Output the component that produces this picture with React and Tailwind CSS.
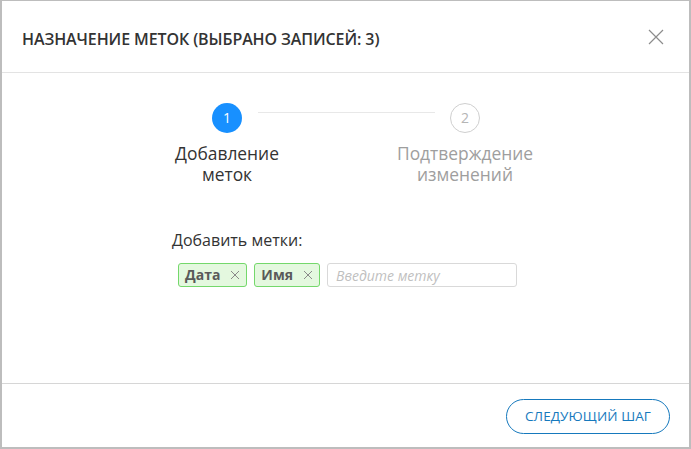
import React from "react";

const font = { fontFamily: '"Open Sans", "Noto Sans", sans-serif' };

const Tag = ({ label }) => {
  return (
    <div className="flex items-center h-[24px] pl-[6px] pr-[6px] gap-[10px] rounded-[3px] border border-[#74d86b] bg-[#e4f8df]">
      <span className="text-[14px] font-bold text-[#5a5a5a] leading-none">{label}</span>
      <svg width="10" height="10" viewBox="0 0 10 10" className="text-[#8a8a8a]">
        <path d="M1 1L9 9M9 1L1 9" stroke="currentColor" strokeWidth="1" />
      </svg>
    </div>
  );
};

const App = () => {
  return (
    <div
      style={font}
      className="w-[691px] h-[449px] flex flex-col bg-white border-t border-l-2 border-r-2 border-b-2 border-[#bdbdbd] text-[#333]"
    >
      <div className="h-[72px] flex justify-between border-b border-[#e3e3e3] shrink-0">
        <h1 className="pl-[20px] pt-[26px] text-[16px] leading-[24px] font-semibold text-[#333] tracking-[-0.1px]">
          НАЗНАЧЕНИЕ МЕТОК (ВЫБРАНО ЗАПИСЕЙ: 3)
        </h1>
        <div className="pt-[28px] pr-[25px]">
          <svg width="16" height="16" viewBox="0 0 16 16" className="text-[#8c8c8c]">
            <path d="M1 1L15 15M15 1L1 15" stroke="currentColor" strokeWidth="1.2" />
          </svg>
        </div>
      </div>

      <div className="flex-1 flex flex-col pt-[30px]">
        <div className="flex items-start pl-[210px]">
          <div className="w-[30px] h-[30px] rounded-full bg-[#1890ff] text-white flex items-center justify-center text-[14px] leading-none">
            1
          </div>
          <div className="ml-[16px] mr-[15px] mt-[9px] w-[177px] h-px bg-[#e8e8e8]" />
          <div className="w-[30px] h-[30px] rounded-full border border-[#cfcfcf] text-[#b5b5b5] flex items-center justify-center text-[14px] leading-none">
            2
          </div>
        </div>

        <div className="flex mt-[10px] text-[17.4px] leading-[21px]">
          <div className="ml-[163px] w-[124px] text-center text-[#333]">Добавление меток</div>
          <div className="ml-[94px] w-[164px] text-center text-[#9e9e9e]">Подтверждение изменений</div>
        </div>

        <p className="mt-[45px] ml-[170px] text-[16px] leading-[20px] text-[#333]">Добавить метки:</p>

        <div className="mt-[13px] ml-[176px] flex gap-[7px]">
          <Tag label="Дата" />
          <Tag label="Имя" />
          <div className="w-[190px] h-[24px] rounded-[3px] border border-[#d9d9d9] flex items-center px-[8px]">
            <span className="text-[14px] italic text-[#bfbfbf]">Введите метку</span>
          </div>
        </div>
      </div>

      <div className="h-[64px] border-t border-[#d6d6d6] flex justify-end items-start pt-[15px] pr-[19px] shrink-0">
        <button className="h-[35px] px-[18px] rounded-full border border-[#1679bd] text-[#1679bd] text-[13.5px] tracking-[0.1px]">
          СЛЕДУЮЩИЙ ШАГ
        </button>
      </div>
    </div>
  );
};

export default App;
